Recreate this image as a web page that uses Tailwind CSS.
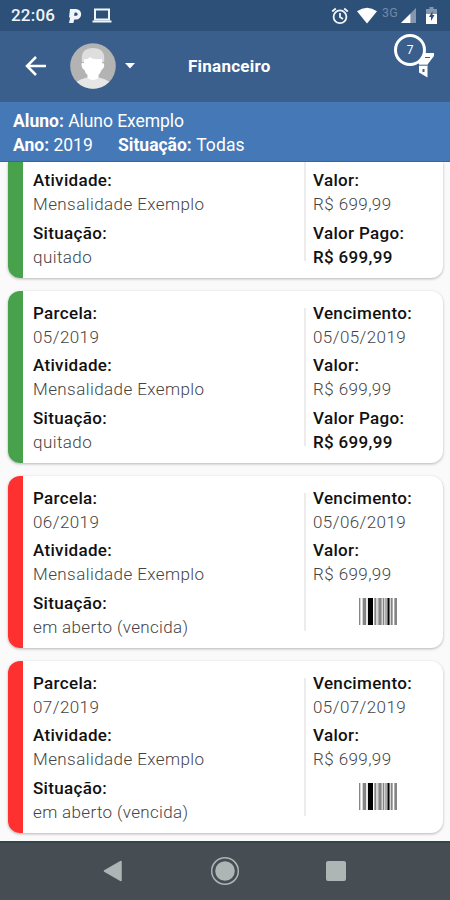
<!DOCTYPE html>
<html lang="pt-BR">
<head>
<meta charset="utf-8">
<title>Financeiro</title>
<script src="https://cdn.jsdelivr.net/npm/@tailwindcss/browser@4"></script>
</head>
<body class="w-[450px] h-[900px] overflow-hidden bg-[#fafafa] font-[Roboto,sans-serif]">
<div class="flex flex-col h-[900px]">
  <div class="h-[31px] shrink-0 bg-[#2d5079] flex items-center pl-[11px] text-[#f1f5f9]">
    <span class="text-[17px] leading-[31px] font-medium w-[57px] tracking-[0.2px]">22:06</span>
    <svg class="w-[14px] h-[16px]" viewBox="0 0 14 16"><path d="M2 1H8a5.200 5.200 0 0 1 0 10.400H6.200L5.400 15H1L2.200 9.500H1Z" fill="currentColor"/><path d="M6.700 4.600H8a1.600 1.600 0 0 1 0 3.200H6Z" fill="#2d5079"/></svg>
    <svg class="w-[20px] h-[16px] ml-[10px]" viewBox="0 0 20 16"><path d="M3 1.500h14v10H3Z" fill="none" stroke="currentColor" stroke-width="2"/><path d="M.5 12.500h19v2H.5Z" fill="currentColor"/></svg>
    <svg class="w-[18px] h-[18px] ml-[219px]" viewBox="0 0 18 18" fill="none" stroke="currentColor" stroke-width="1.800"><circle cx="9" cy="9.800" r="6.400"/><path d="M9 6v4l3 2M1.200 4.500 4.800 1.500M16.800 4.500 13.200 1.500"/></svg>
    <svg class="w-[20px] h-[17px] ml-[8px]" viewBox="0 0 20 17"><path d="M0 4.300Q10-3 20 4.300L10 16.500Z" fill="#fff"/></svg>
    <span class="text-[12.500px] leading-[12px] ml-[5px] w-[17px] mb-[5px] text-[#7089a8] tracking-[0.2px]">3G</span>
    <svg class="w-[15px] h-[15px] ml-[2px]" viewBox="0 0 16 16"><path d="M0 16 16 0V16Z" fill="#8397b0"/><path d="M0 16 10 6V16Z" fill="#fff"/></svg>
    <svg class="w-[11px] h-[17px] ml-[10px]" viewBox="0 0 11 17"><path d="M3.500 0h4v2H11v5H0V2h3.500Z" fill="#8397b0"/><path d="M0 7h11v10H0Z" fill="#fff"/><path d="M6.500 4 3 10h2v4l3.500-6h-2Z" fill="#2d5079"/></svg>
  </div>

  <header class="relative h-[71px] shrink-0 bg-[#3b5f8d] flex items-center pl-[25px] pb-[2px] text-white">
    <svg class="w-[21px] h-[20px]" viewBox="0 0 21 20" fill="none" stroke="currentColor" stroke-width="2.500"><path d="M21 10H2M11 1 2 10l9 9"/></svg>
    <svg class="w-[46px] h-[46px] ml-[24px]" viewBox="0 0 46 46"><defs><clipPath id="face"><circle cx="23" cy="23" r="22.800"/></clipPath></defs><g clip-path="url(#face)"><path d="M0 0h46v46H0Z" fill="#b3b3b3"/><path d="M3 46Q4 37 17 34.500H29Q42 37 43 46Z" fill="#e6e6e6"/><path d="M12 19Q10 5 23 5T34 19Z" fill="#dedede"/><path d="M14 16Q17 17 20 14 23 17 32 16V20Q35 20 34 24 33 26 31.500 27 30 31 28.500 32V35Q23 39 17.500 35V32Q15 30 14.500 27 12 26 11.500 22 11 19 14 20Z" fill="#fff"/></g></svg>
    <svg class="w-[10px] h-[6px] ml-[9px]" viewBox="0 0 10 6"><path d="M0 0h10L5 5.500Z" fill="currentColor"/></svg>
    <h1 class="ml-[53px] text-[17px] font-bold leading-[24px] tracking-[0.25px]">Financeiro</h1>
    <svg class="absolute left-[414px] top-[21px] w-[20px] h-[26px]" viewBox="0 0 20 26"><path d="M5 1H20V4L13.500 12.500V25.500L5 20.500V12L2 8Z" fill="#fff"/><path d="M11 5.500h5M5 13.200h8.500" stroke="#3b5f8d" stroke-width="1"/><path d="M8.500 17h2v3h-2Z" fill="#3b5f8d"/></svg>
    <div class="absolute left-[394px] top-[3px] w-[32px] h-[32px] rounded-full border-[3px] border-white bg-[#3b5f8d] flex items-center justify-center text-[12px] leading-none">7</div>
  </header>

  <section class="h-[60px] shrink-0 bg-[#4478b6] pl-[13px] pt-[7px] text-white text-[17.500px] leading-[24px] border-b border-[#2e67ad]">
    <div class="whitespace-nowrap"><b class="font-bold">Aluno:</b> <span class="tracking-[-0.05px]">Aluno Exemplo</span></div>
    <div class="flex whitespace-nowrap"><div class="w-[105px]"><b class="font-bold">Ano:</b> <span>2019</span></div><div><b class="font-bold">Situação:</b> <span class="tracking-[0.1px]">Todas</span></div></div>
  </section>

  <main class="h-[679px] shrink-0 overflow-hidden flex flex-col justify-end gap-[13px] pl-[8px] pr-[7px] pb-[8.500px] text-[17px] leading-[24px] tracking-[0.42px] text-[#444] font-light">
    <article class="h-[116px] shrink-0 flex rounded-b-[12px] overflow-hidden bg-white shadow-[0_1px_3px_rgba(0,0,0,0.28)]">
      <div class="w-[15px] bg-[#48a14b]"></div>
      <div class="w-[281px] pl-[10px] pt-[6.600px] flex flex-col gap-[4.600px]">
        <div><div class="font-medium tracking-[0.33px] text-[#111]">Atividade:</div><div>Mensalidade Exemplo</div></div>
        <div><div class="font-medium tracking-[0.33px] text-[#111]">Situação:</div><div>quitado</div></div>
      </div>
      <div class="w-[2px] h-[99px] bg-[#ececec]"></div>
      <div class="pl-[7px] pt-[6.600px] flex flex-col gap-[4.600px]">
        <div><div class="font-medium tracking-[0.33px] text-[#111]">Valor:</div><div>R$ 699,99</div></div>
        <div><div class="font-medium tracking-[0.33px] text-[#111]">Valor Pago:</div><div class="font-medium tracking-[0.33px] text-[#111]">R$ 699,99</div></div>
      </div>
    </article>
    <article class="h-[172px] shrink-0 flex rounded-[12px] overflow-hidden bg-white shadow-[0_1px_3px_rgba(0,0,0,0.28)]">
      <div class="w-[15px] bg-[#48a14b]"></div>
      <div class="w-[281px] pl-[10px] pt-[10px] flex flex-col gap-[4.600px]">
        <div><div class="font-medium tracking-[0.33px] text-[#111]">Parcela:</div><div>05/2019</div></div>
        <div><div class="font-medium tracking-[0.33px] text-[#111]">Atividade:</div><div>Mensalidade Exemplo</div></div>
        <div><div class="font-medium tracking-[0.33px] text-[#111]">Situação:</div><div>quitado</div></div>
      </div>
      <div class="w-[2px] h-[138px] mt-[17px] bg-[#ececec]"></div>
      <div class="pl-[7px] pt-[10px] flex flex-col gap-[4.600px]">
        <div><div class="font-medium tracking-[0.33px] text-[#111]">Vencimento:</div><div>05/05/2019</div></div>
        <div><div class="font-medium tracking-[0.33px] text-[#111]">Valor:</div><div>R$ 699,99</div></div>
        <div><div class="font-medium tracking-[0.33px] text-[#111]">Valor Pago:</div><div class="font-medium tracking-[0.33px] text-[#111]">R$ 699,99</div></div>
      </div>
    </article>
    <article class="h-[172px] shrink-0 flex rounded-[12px] overflow-hidden bg-white shadow-[0_1px_3px_rgba(0,0,0,0.28)]">
      <div class="w-[15px] bg-[#ff3030]"></div>
      <div class="w-[281px] pl-[10px] pt-[10px] flex flex-col gap-[4.600px]">
        <div><div class="font-medium tracking-[0.33px] text-[#111]">Parcela:</div><div>06/2019</div></div>
        <div><div class="font-medium tracking-[0.33px] text-[#111]">Atividade:</div><div>Mensalidade Exemplo</div></div>
        <div><div class="font-medium tracking-[0.33px] text-[#111]">Situação:</div><div class="tracking-[0.35px]">em aberto (vencida)</div></div>
      </div>
      <div class="w-[2px] h-[138px] mt-[17px] bg-[#ececec]"></div>
      <div class="pl-[7px] pt-[10px] flex flex-col gap-[4.600px]">
        <div><div class="font-medium tracking-[0.33px] text-[#111]">Vencimento:</div><div>05/06/2019</div></div>
        <div><div class="font-medium tracking-[0.33px] text-[#111]">Valor:</div><div>R$ 699,99</div></div>
        <svg class="w-[38px] h-[27px] ml-[46px] mt-[7px]" viewBox="0 0 38 27"><path d="M0 0h38v27H0Z" fill="#d4d4d4"/><path d="M0 0h1.500v27H0ZM4 0h3v27H4ZM15.500 0h1.500v27h-1.500ZM19.500 0h3v27h-3ZM24 0h1v27h-1ZM26.500 0h1v27h-1ZM32 0h1.500v27H32ZM35.500 0H38v27h-2.500Z" fill="#858585"/><path d="M9 0h5v27H9ZM28.500 0h2v27h-2Z" fill="#000"/><path d="M1.500 0h1.500v27H1.500ZM14 0h1v27h-1ZM7.500 0h1v27h-1ZM34 0h1v27h-1Z" fill="#fff"/></svg>
      </div>
    </article>
    <article class="h-[172px] shrink-0 flex rounded-[12px] overflow-hidden bg-white shadow-[0_1px_3px_rgba(0,0,0,0.28)]">
      <div class="w-[15px] bg-[#ff3030]"></div>
      <div class="w-[281px] pl-[10px] pt-[10px] flex flex-col gap-[4.600px]">
        <div><div class="font-medium tracking-[0.33px] text-[#111]">Parcela:</div><div>07/2019</div></div>
        <div><div class="font-medium tracking-[0.33px] text-[#111]">Atividade:</div><div>Mensalidade Exemplo</div></div>
        <div><div class="font-medium tracking-[0.33px] text-[#111]">Situação:</div><div class="tracking-[0.35px]">em aberto (vencida)</div></div>
      </div>
      <div class="w-[2px] h-[138px] mt-[17px] bg-[#ececec]"></div>
      <div class="pl-[7px] pt-[10px] flex flex-col gap-[4.600px]">
        <div><div class="font-medium tracking-[0.33px] text-[#111]">Vencimento:</div><div>05/07/2019</div></div>
        <div><div class="font-medium tracking-[0.33px] text-[#111]">Valor:</div><div>R$ 699,99</div></div>
        <svg class="w-[38px] h-[27px] ml-[46px] mt-[7px]" viewBox="0 0 38 27"><path d="M0 0h38v27H0Z" fill="#d4d4d4"/><path d="M0 0h1.500v27H0ZM4 0h3v27H4ZM15.500 0h1.500v27h-1.500ZM19.500 0h3v27h-3ZM24 0h1v27h-1ZM26.500 0h1v27h-1ZM32 0h1.500v27H32ZM35.500 0H38v27h-2.500Z" fill="#858585"/><path d="M9 0h5v27H9ZM28.500 0h2v27h-2Z" fill="#000"/><path d="M1.500 0h1.500v27H1.500ZM14 0h1v27h-1ZM7.500 0h1v27h-1ZM34 0h1v27h-1Z" fill="#fff"/></svg>
      </div>
    </article>
  </main>

  <nav class="h-[59px] shrink-0 bg-[#464e53] border-t-2 border-[#35454a] flex items-center pl-[103px] pb-[2px] text-[#adb5b5]">
    <svg class="w-[19px] h-[22px]" viewBox="0 0 19 22"><path d="M18 1.500v19L1.500 11Z" fill="currentColor" stroke="currentColor" stroke-width="1.500" stroke-linejoin="round"/></svg>
    <svg class="w-[30px] h-[30px] ml-[88px]" viewBox="0 0 30 30"><circle cx="15" cy="15" r="13.300" fill="none" stroke="currentColor" stroke-width="1.500"/><circle cx="15" cy="15" r="9.800" fill="currentColor"/></svg>
    <div class="w-[20px] h-[20px] ml-[86px] rounded-[2px] bg-[#adb5b5]"></div>
  </nav>
</div>
</body>
</html>
